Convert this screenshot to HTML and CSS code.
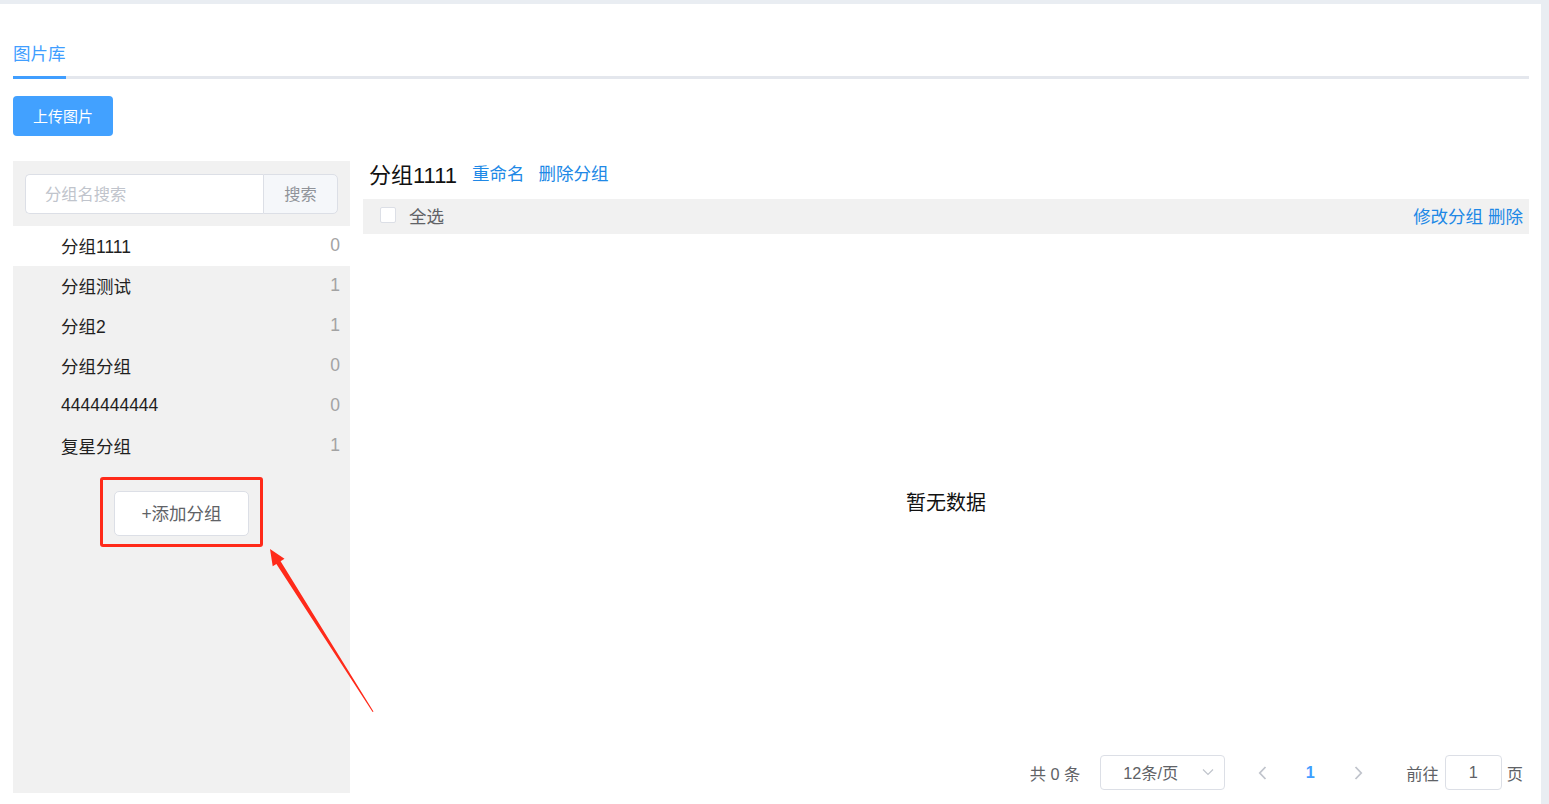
FILE: index.html
```html
<!DOCTYPE html>
<html lang="zh-CN">
<head>
<meta charset="utf-8">
<title>图片库</title>
<link rel="stylesheet" href="styles.css">
</head>
<body>
<div class="card">
  <div class="tabs">
    <div class="tab active">图片库</div>
  </div>
  <div class="toolbar">
    <button class="btn-primary">上传图片</button>
  </div>
  <div class="main">
    <aside class="groups">
      <div class="search">
        <input class="search-input" placeholder="分组名搜索">
        <button class="search-btn">搜索</button>
      </div>
      <ul class="group-list">
        <li class="group-item selected"><span class="g-name">分组1111</span><span class="g-count">0</span></li>
        <li class="group-item"><span class="g-name">分组测试</span><span class="g-count">1</span></li>
        <li class="group-item"><span class="g-name">分组2</span><span class="g-count">1</span></li>
        <li class="group-item"><span class="g-name">分组分组</span><span class="g-count">0</span></li>
        <li class="group-item"><span class="g-name">4444444444</span><span class="g-count">0</span></li>
        <li class="group-item"><span class="g-name">复星分组</span><span class="g-count">1</span></li>
      </ul>
      <div class="add-wrap">
        <button class="btn-add">+添加分组</button>
      </div>
    </aside>
    <section class="content">
      <div class="title-row">
        <span class="title">分组1111</span>
        <a class="link">重命名</a>
        <a class="link">删除分组</a>
      </div>
      <div class="select-bar">
        <label class="check"><span class="box"></span><span class="check-text">全选</span></label>
        <div class="bar-actions"><a class="link">修改分组</a> <a class="link">删除</a></div>
      </div>
      <div class="empty">暂无数据</div>
      <div class="pagination">
        <span class="total">共 0 条</span>
        <div class="size-select">
          <span>12条/页</span>
          <svg class="caret" width="12" height="8" viewBox="0 0 12 8"><path d="M1 1.5 L6 6.5 L11 1.5" fill="none" stroke="#c0c4cc" stroke-width="1.2"/></svg>
        </div>
        <button class="pg-btn"><svg width="9" height="14" viewBox="0 0 9 14"><path d="M7.5 1 L1.8 7 L7.5 13" fill="none" stroke="#c0c4cc" stroke-width="1.8"/></svg></button>
        <span class="pager">1</span>
        <button class="pg-btn"><svg width="9" height="14" viewBox="0 0 9 14"><path d="M1.5 1 L7.2 7 L1.5 13" fill="none" stroke="#c0c4cc" stroke-width="1.8"/></svg></button>
        <span class="jump">前往<input class="jump-input" value="1">页</span>
      </div>
    </section>
  </div>
</div>
<div class="highlight"></div>
<svg class="arrow" width="1549" height="804" viewBox="0 0 1549 804">
  <polygon points="270,549 284.5,558.7 280.6,561.2 373.5,711.5 372.6,711.9 276.4,563.9 272.7,566.3" fill="#ff2a1a"/>
</svg>
</body>
</html>
```

FILE: styles.css
```css
* { box-sizing: border-box; }
html, body { margin: 0; padding: 0; }
body {
  background: #e9edf2;
  font-family: "Liberation Sans", "Noto Sans CJK SC", sans-serif;
  color: #303133;
  width: 1549px;
  height: 804px;
  overflow: hidden;
  position: relative;
}
.card {
  margin: 4px 8px 0 0;
  background: #ffffff;
  padding: 25px 12px 0 13px;
  height: 800px;
}
.tabs {
  height: 50px;
  border-bottom: 3px solid #e4e7ed;
  display: flex;
}
.tab {
  height: 50px;
  line-height: 51px;
  font-size: 17.5px;
  color: #409eff;
  border-bottom: 3px solid #409eff;
}
.toolbar { margin-top: 17px; display: flex; }
.btn-primary {
  width: 100px;
  height: 40px;
  border: 0;
  border-radius: 4px;
  background: #42a1ff;
  color: #fff;
  font-family: inherit;
  font-size: 15px;
  padding: 0 0 2px 0;
}
.main {
  margin-top: 25px;
  display: flex;
  gap: 13px;
  height: 632px;
}
.groups {
  width: 337px;
  flex: none;
  background: #f1f1f1;
  display: flex;
  flex-direction: column;
}
.search {
  display: flex;
  padding: 13px 12px 12px 12px;
}
.search-input {
  flex: 1;
  min-width: 0;
  height: 40px;
  border: 1px solid #dcdfe6;
  border-right: 0;
  border-radius: 5px 0 0 5px;
  padding: 0 19px;
  font-family: inherit;
  font-size: 16.25px;
  color: #606266;
  background: #fff;
  outline: none;
}
.search-input::placeholder { color: #c0c4cc; }
.search-btn {
  width: 75px;
  height: 40px;
  border: 1px solid #dcdfe6;
  border-radius: 0 5px 5px 0;
  background: #f5f7fa;
  color: #909399;
  font-family: inherit;
  font-size: 16.25px;
  padding: 0 0 2px 0;
}
.group-list { list-style: none; margin: 0; padding: 0; }
.group-item {
  height: 40px;
  display: flex;
  align-items: center;
  justify-content: space-between;
  padding: 0 10px 2px 48px;
  font-size: 17.5px;
  color: #1f1f1f;
}
.group-item.selected { background: #ffffff; }
.g-count { color: #a3a3a3; }
.add-wrap {
  display: flex;
  justify-content: center;
  padding-top: 25px;
}
.btn-add {
  width: 135px;
  height: 45px;
  background: #fff;
  border: 1px solid #dcdfe6;
  border-radius: 5px;
  color: #606266;
  font-family: inherit;
  font-size: 17.5px;
  padding: 0 0 2px 0;
}
.content {
  flex: 1;
  display: flex;
  flex-direction: column;
  min-width: 0;
}
.title-row {
  height: 26px;
  margin-bottom: 12px;
  display: flex;
  align-items: center;
  padding: 0 0 3px 6px;
  gap: 14px;
}
.title { font-size: 22px; color: #111; margin-right: 1px; }
.link { color: #2088e6; font-size: 17.5px; cursor: pointer; }
.select-bar {
  height: 35px;
  background: #f1f1f1;
  display: flex;
  align-items: center;
  justify-content: space-between;
  padding: 0 6px 3px 17px;
}
.check { display: flex; align-items: center; }
.box {
  width: 16px;
  height: 16px;
  border: 1px solid #dcdfe6;
  border-radius: 2px;
  background: #fff;
  margin-right: 13px;
}
.check-text { font-size: 17.5px; color: #606266; }
.bar-actions { font-size: 17.5px; }
.empty {
  flex: 1;
  display: flex;
  align-items: center;
  justify-content: center;
  padding-top: 12px;
  font-size: 20px;
  color: #111;
}
.pagination {
  height: 35px;
  margin-bottom: 2px;
  display: flex;
  align-items: center;
  justify-content: flex-end;
  padding: 0 6px 2px 0;
  font-size: 16.25px;
  color: #606266;
}
.total { margin-right: 20px; }
.size-select {
  width: 125px;
  height: 35px;
  border: 1px solid #dcdfe6;
  border-radius: 4px;
  display: flex;
  align-items: center;
  justify-content: space-between;
  padding: 0 10px 2px 22px;
  margin-right: 12px;
}
.pg-btn {
  width: 50px;
  height: 35px;
  border: 0;
  background: transparent;
  padding: 0;
  display: flex;
  align-items: center;
  justify-content: center;
}
.pager {
  width: 46px;
  text-align: center;
  color: #409eff;
  font-weight: bold;
}
.jump { margin-left: 23px; display: flex; align-items: center; }
.jump-input {
  width: 57px;
  height: 35px;
  margin: 0 5px 0 6px;
  border: 1px solid #dcdfe6;
  border-radius: 4px;
  text-align: center;
  font-family: inherit;
  font-size: 16.25px;
  color: #606266;
  outline: none;
}
.highlight {
  position: absolute;
  left: 100px;
  top: 477px;
  width: 163px;
  height: 70px;
  border: 3px solid #ff2a1a;
  border-radius: 3px;
}
.arrow { position: absolute; left: 0; top: 0; pointer-events: none; }
```
